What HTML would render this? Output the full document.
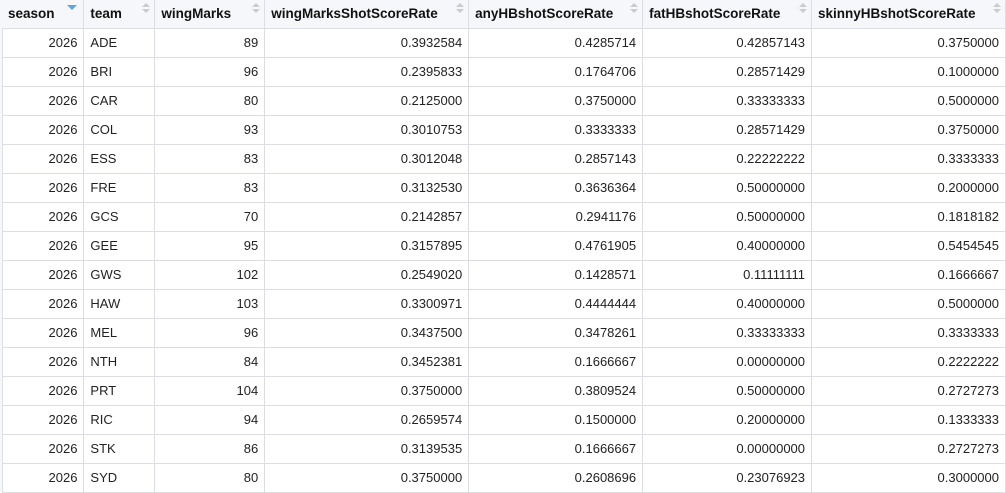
<!DOCTYPE html><html><head><style>
body{margin:0;width:1006px;height:492px;overflow:hidden;background:#fff;font-family:"Liberation Sans",sans-serif;font-size:13px;color:#222}
table{border-collapse:collapse;table-layout:fixed;position:absolute;left:2px;top:0}
td,th{border-right:1px solid #dcdee3;border-bottom:1px solid #dcdee3;height:29px;padding:0 6px;white-space:nowrap;overflow:hidden;box-sizing:border-box}
th{background:#f5f7fa;text-align:left;font-weight:bold;color:#111;position:relative;height:28px;font-size:13.5px}
td{text-align:right}
td.l{text-align:left}
.s{position:absolute;right:8px;top:3px;width:0;height:0}
.s:before{content:"";position:absolute;left:-4px;top:0;border:4px solid transparent;border-bottom:4px solid #ccc;border-top:0}
.s:after{content:"";position:absolute;left:-4px;top:6px;border:4px solid transparent;border-top:4px solid #ccc;border-bottom:0}
.d{position:absolute;right:6px;top:5px;border:5px solid transparent;border-top:5px solid #5aa5e6;border-bottom:0}
.lb{position:absolute;left:0;top:0;width:2px;height:492px;border-right:1px solid #dcdee3;background:#f5f7fa}
</style></head><body><div class="lb"></div>
<table>
<colgroup><col style="width:82px"><col style="width:71px"><col style="width:110px"><col style="width:204px"><col style="width:174px"><col style="width:169px"><col style="width:194px"></colgroup>
<tr><th>season<span class="d"></span></th><th>team<span class="s"></span></th><th>wingMarks<span class="s"></span></th><th>wingMarksShotScoreRate<span class="s"></span></th><th>anyHBshotScoreRate<span class="s"></span></th><th>fatHBshotScoreRate<span class="s"></span></th><th>skinnyHBshotScoreRate<span class="s"></span></th></tr>
<tr><td>2026</td><td class="l">ADE</td><td>89</td><td>0.3932584</td><td>0.4285714</td><td>0.42857143</td><td>0.3750000</td></tr>
<tr><td>2026</td><td class="l">BRI</td><td>96</td><td>0.2395833</td><td>0.1764706</td><td>0.28571429</td><td>0.1000000</td></tr>
<tr><td>2026</td><td class="l">CAR</td><td>80</td><td>0.2125000</td><td>0.3750000</td><td>0.33333333</td><td>0.5000000</td></tr>
<tr><td>2026</td><td class="l">COL</td><td>93</td><td>0.3010753</td><td>0.3333333</td><td>0.28571429</td><td>0.3750000</td></tr>
<tr><td>2026</td><td class="l">ESS</td><td>83</td><td>0.3012048</td><td>0.2857143</td><td>0.22222222</td><td>0.3333333</td></tr>
<tr><td>2026</td><td class="l">FRE</td><td>83</td><td>0.3132530</td><td>0.3636364</td><td>0.50000000</td><td>0.2000000</td></tr>
<tr><td>2026</td><td class="l">GCS</td><td>70</td><td>0.2142857</td><td>0.2941176</td><td>0.50000000</td><td>0.1818182</td></tr>
<tr><td>2026</td><td class="l">GEE</td><td>95</td><td>0.3157895</td><td>0.4761905</td><td>0.40000000</td><td>0.5454545</td></tr>
<tr><td>2026</td><td class="l">GWS</td><td>102</td><td>0.2549020</td><td>0.1428571</td><td>0.11111111</td><td>0.1666667</td></tr>
<tr><td>2026</td><td class="l">HAW</td><td>103</td><td>0.3300971</td><td>0.4444444</td><td>0.40000000</td><td>0.5000000</td></tr>
<tr><td>2026</td><td class="l">MEL</td><td>96</td><td>0.3437500</td><td>0.3478261</td><td>0.33333333</td><td>0.3333333</td></tr>
<tr><td>2026</td><td class="l">NTH</td><td>84</td><td>0.3452381</td><td>0.1666667</td><td>0.00000000</td><td>0.2222222</td></tr>
<tr><td>2026</td><td class="l">PRT</td><td>104</td><td>0.3750000</td><td>0.3809524</td><td>0.50000000</td><td>0.2727273</td></tr>
<tr><td>2026</td><td class="l">RIC</td><td>94</td><td>0.2659574</td><td>0.1500000</td><td>0.20000000</td><td>0.1333333</td></tr>
<tr><td>2026</td><td class="l">STK</td><td>86</td><td>0.3139535</td><td>0.1666667</td><td>0.00000000</td><td>0.2727273</td></tr>
<tr><td>2026</td><td class="l">SYD</td><td>80</td><td>0.3750000</td><td>0.2608696</td><td>0.23076923</td><td>0.3000000</td></tr>
</table></body></html>
